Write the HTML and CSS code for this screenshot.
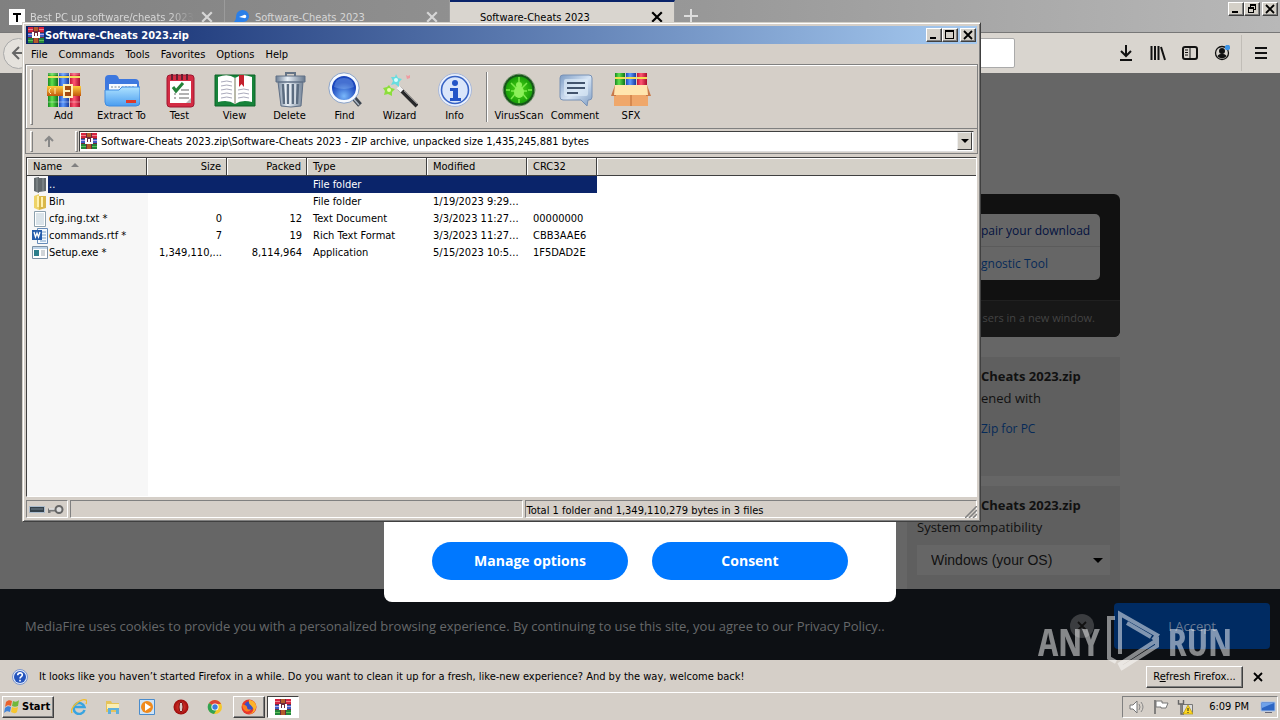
FILE: index.html
```html
<!DOCTYPE html>
<html lang="en">
<head>
<meta charset="utf-8">
<title>Software-Cheats 2023</title>
<link rel="stylesheet" href="styles.css">
</head>
<body>
<svg class="defs" aria-hidden="true">
  <defs>
    <linearGradient id="gGreen"><stop offset="0" stop-color="#178a20"/><stop offset=".4" stop-color="#5fe04e"/><stop offset="1" stop-color="#0d7418"/></linearGradient>
    <linearGradient id="gBlue"><stop offset="0" stop-color="#1e49b8"/><stop offset=".4" stop-color="#5f9bff"/><stop offset="1" stop-color="#183a9c"/></linearGradient>
    <linearGradient id="gRed"><stop offset="0" stop-color="#c01637"/><stop offset=".4" stop-color="#ff5672"/><stop offset="1" stop-color="#a80d2b"/></linearGradient>
    <linearGradient id="gGold" x2="0" y2="1"><stop offset="0" stop-color="#ffcf3d"/><stop offset="1" stop-color="#c2560d"/></linearGradient>
    <linearGradient id="gSky" x2="0" y2="1"><stop offset="0" stop-color="#aee2ff"/><stop offset="1" stop-color="#4a9df0"/></linearGradient>
    <linearGradient id="gSteel"><stop offset="0" stop-color="#6d7f95"/><stop offset=".4" stop-color="#e8eff6"/><stop offset="1" stop-color="#67788d"/></linearGradient>
    <linearGradient id="gNote" x2="1" y2="1"><stop offset="0" stop-color="#7d9cc4"/><stop offset=".5" stop-color="#d7e5f5"/><stop offset="1" stop-color="#7c9bc2"/></linearGradient>
    <radialGradient id="gLens" cy=".8"><stop offset="0" stop-color="#7ab8fb"/><stop offset="1" stop-color="#1b47bd"/></radialGradient>
    <radialGradient id="gVirus"><stop offset="0" stop-color="#4fd815"/><stop offset="1" stop-color="#139a08"/></radialGradient>
    <radialGradient id="gOpera"><stop offset="0" stop-color="#ef4a3c"/><stop offset="1" stop-color="#9c0909"/></radialGradient>
    <symbol id="rar" viewBox="0 0 16 16">
      <path fill="#6d2a3c" d="M0 0h16v16H0z"/>
      <path fill="#d5233f" d="M0 0h5v5H0zM6 0h4v4H6zM11 0h5v5h-5z"/><path fill="#f0808a" d="M0 2h5v1H0zM11 2h5v1h-5z"/>
      <path fill="#3e5cc4" d="M0 6h5v4H0zM11 6h5v4h-5z"/><path fill="#b8a5e6" d="M0 7h4v1H0zM12 7h4v1h-4z"/>
      <path fill="#22863a" d="M0 11h5v5H0zM11 11h5v5h-5z"/><path fill="#60bf57" d="M0 13h5v1H0zM11 13h5v1h-5z"/>
      <path fill="#b55a2a" d="M6 0h4v4H6zM6 11h4v5H6z"/>
      <path fill="#fff" d="M4 5h2v4h1V6h2v3h1V5h2v6H4z"/>
    </symbol>
    <symbol id="cross" viewBox="0 0 10 10"><path d="M1 1l8 8M9 1L1 9" stroke="currentColor" stroke-width="1.8" fill="none"/></symbol>
    <symbol id="min" viewBox="0 0 10 10"><path d="M1 7h6v2H1z"/></symbol>
    <symbol id="max" viewBox="0 0 10 10"><path d="M0 0h9v9H0zM1 2v6h7V2z" fill-rule="evenodd"/></symbol>
    <symbol id="restore" viewBox="0 0 10 10"><path d="M3 0h6v6H7V5h1V2H4v1H3zM1 3h6v6H1zM2 5v3h4V5z" fill-rule="evenodd"/></symbol>
  </defs>
</svg>

<div class="screen">
  <header class="tabstrip">
    <div class="tab">
      <svg class="ic16" viewBox="0 0 16 16"><path fill="#fff" d="M0 0h16v16H0z"/><path d="M4 4h8v2H9v7H7V6H4z"/></svg>
      <span class="tab-name fade">Best PC up software/cheats 2023</span>
      <button class="tab-x" aria-label="Close tab"><svg class="ic12"><use href="#cross"/></svg></button>
    </div>
    <div class="tab">
      <svg class="ic16" viewBox="0 0 16 16"><path fill="#2b7fe8" d="M2 8a6 6 0 0 1 13-1c0 5-4 6-7 6H0c1-1 2-3 2-5z"/><path fill="#fff" d="M5 8l5-2c3-1 3 4 0 3z"/></svg>
      <span class="tab-name">Software-Cheats 2023</span>
      <button class="tab-x" aria-label="Close tab"><svg class="ic12"><use href="#cross"/></svg></button>
    </div>
    <div class="tab active">
      <span class="tab-name">Software-Cheats 2023</span>
      <button class="tab-x" aria-label="Close tab"><svg class="ic12"><use href="#cross"/></svg></button>
    </div>
    <button class="newtab" aria-label="New tab"><svg class="ic14" viewBox="0 0 14 14"><path d="M7 0v14M0 7h14" stroke="#ddd" stroke-width="2"/></svg></button>
    <div class="winbtns">
      <button aria-label="Minimize"><svg><use href="#min"/></svg></button><button aria-label="Restore"><svg><use href="#restore"/></svg></button><button class="close" aria-label="Close"><svg><use href="#cross"/></svg></button>
    </div>
  </header>

  <nav class="navbar">
    <button class="back" aria-label="Back"><svg class="ic16" viewBox="0 0 16 16"><path d="M15 8H2M8 2L2 8l6 6" fill="none" stroke="#666" stroke-width="2"/></svg></button>
    <input class="url" type="text" aria-label="Address">
    <div class="navicons">
      <button aria-label="Downloads"><svg viewBox="0 0 16 16"><path d="M8 0v11M3 6l5 5 5-5M2 15h12" fill="none" stroke="#111" stroke-width="2"/></svg></button>
      <button aria-label="Library"><svg viewBox="0 0 16 16"><path d="M1.500 1v14M5 1v14M8.500 1v14M11 2l4 13" fill="none" stroke="#111" stroke-width="2"/></svg></button>
      <button aria-label="Sidebars"><svg viewBox="0 0 16 16"><rect x="1" y="2" width="14" height="12" rx="2" fill="none" stroke="#111" stroke-width="2"/><path d="M8 2v12M3 5h3M3 7.500h3M3 10h3" stroke="#111"/></svg></button>
      <button aria-label="Account"><svg viewBox="0 0 16 16"><circle cx="8" cy="8" r="6.500" fill="none" stroke="#111" stroke-width="1.300"/><circle cx="8" cy="6" r="3" fill="#111"/><path d="M3.500 11c2-3 7-3 9 0-2 3-7 3-9 0z" fill="#111"/><circle cx="13.500" cy="2.500" r="2.700" fill="#3d94e6"/></svg></button>
      <span class="navsep"></span>
      <button aria-label="Menu"><svg viewBox="0 0 16 16"><path d="M2 3h12M2 8h12M2 13h12" stroke="#111" stroke-width="2"/></svg></button>
    </div>
  </nav>

  <main class="page">
    <div class="column">
      <section class="hero">
        <div class="links"><a class="repair" href="#">pair your download</a><a href="#">gnostic Tool</a></div>
        <p class="hero-foot">sers in a new window.</p>
      </section>
      <aside class="cards">
        <section class="card first"><h3>Cheats 2023.zip</h3><p class="tail">ened with</p><a class="tail" href="#">Zip for PC</a></section>
        <section class="card"><h3>Cheats 2023.zip</h3>
          <label for="os">System compatibility</label>
          <div class="selectbox"><select id="os"><option>Windows (your OS)</option></select><svg class="arrow" viewBox="0 0 10 5"><path d="M0 0h10L5 5z"/></svg></div>
        </section>
      </aside>
    </div>
    <div class="cookies">
      <p>MediaFire uses cookies to provide you with a personalized browsing experience. By continuing to use this site, you agree to our Privacy Policy..</p>
      <button class="dismiss" aria-label="Dismiss"><svg class="ic10"><use href="#cross"/></svg></button>
      <button class="accept">I Accept</button>
    </div>
    <div class="consent"><button>Manage options</button><button>Consent</button></div>
  </main>

  <div class="notice">
    <svg class="ic16" viewBox="0 0 16 16"><circle cx="8" cy="8" r="7.500" fill="#dfe8fa" stroke="#7c96cc"/><circle cx="8" cy="8" r="6" fill="#2454bd"/><path d="M5.700 6.300c.2-3.300 4.800-3 4.600-.3C10.200 7.700 8 7.600 8 9.600M8 10.800v1.700" stroke="#fff" stroke-width="1.600" fill="none"/></svg>
    <span class="notice-text">It looks like you haven’t started Firefox in a while. Do you want to clean it up for a fresh, like-new experience? And by the way, welcome back!</span>
    <button class="refresh">R<u>e</u>fresh Firefox...</button>
    <button class="notice-x" aria-label="Close"><svg class="ic10"><use href="#cross"/></svg></button>
  </div>

  <footer class="taskbar">
    <button class="start"><svg viewBox="0 0 16 16"><path d="M2 3c2-2 4-2 6-1L7 7C5 6 3 6 1 8z" fill="#e8622c"/><path d="M9 2c2 1 4 1 6-1l-1 6c-2 1-4 1-6 0z" fill="#70b83c"/><path d="M1 9c2-2 4-2 6-1l-1 5c-2-1-4-1-6 1z" fill="#3f83d8"/><path d="M8 8c2 1 4 1 6 0l-1 5c-2 2-4 1-6 0z" fill="#f6c62f"/></svg>Start</button>
    <div class="quick">
      <button aria-label="Internet Explorer"><svg viewBox="0 0 16 16"><path d="M13.500 11A5.500 5.500 0 1 1 13.500 8H3" fill="none" stroke="#38a4e0" stroke-width="2.500"/><path d="M1 14C-2 9 10-1 15 1c1 0 1 2 0 4" fill="none" stroke="#f0bd32" stroke-width="1.400"/></svg></button>
      <button aria-label="Explorer"><svg viewBox="0 0 16 16"><path d="M1 2h5l1 2h7v9H1z" fill="#e5c35a"/><path d="M2 5h12v5H2z" fill="#fbeeb2"/><path d="M3 15V9h11v6h-3v-4H6v4z" fill="#5fb0dc"/></svg></button>
      <button aria-label="Media Player"><svg viewBox="0 0 16 16"><path d="M.5.500h15v15H.5z" fill="#cfe4f7" stroke="#4a8ccc"/><circle cx="8" cy="8" r="6" fill="#f08a1c"/><path d="M6 4l6 4-6 4z" fill="#fff"/></svg></button>
      <button aria-label="Opera"><svg viewBox="0 0 16 16"><circle cx="8" cy="8" r="7.500" fill="url(#gOpera)"/><ellipse cx="8" cy="8" rx="2" ry="5" fill="#d8c9c4" stroke="#7a0505"/></svg></button>
      <button aria-label="Chrome"><svg viewBox="0 0 16 16"><circle cx="8" cy="8" r="7" fill="#f4c72c"/><path d="M8 8L2 4a7 7 0 0 1 12 1H8z" fill="#dd4538"/><path d="M8 8L2 4a7 7 0 0 0 5 11l3-5z" fill="#31a352"/><circle cx="8" cy="8" r="3.600" fill="#fff"/><circle cx="8" cy="8" r="2.700" fill="#3b7de0"/></svg></button>
    </div>
    <button class="task" aria-label="Firefox"><svg viewBox="0 0 16 16"><circle cx="8" cy="8" r="7.500" fill="#e8372c"/><circle cx="8" cy="7" r="4.500" fill="#3b4fc4"/><path d="M8 1c5 0 8 4 7 8s-4 6-7 6c4-1 5-4 4-6-1-3-5-3-4-8z" fill="#fdb32a"/><path d="M1 4c1 3 4 1 5 4 0 3 3 3 4 2-1 4-9 4-9-6z" fill="#ff7e1e"/></svg></button>
    <button class="task pressed" aria-label="WinRAR"><svg><use href="#rar"/></svg></button>
    <div class="tray">
      <svg viewBox="0 0 16 16"><path d="M1 6h3l4-4v12l-4-4H1z" fill="#fff" stroke="#777"/><path d="M10 5q2 3 0 6M12 3q4 5 0 10" fill="none" stroke="#888"/></svg>
      <svg viewBox="0 0 16 16"><path d="M2 1v14" stroke="#666" stroke-width="1.500"/><path d="M3 2h6v2h6l-2 5H8V8H3z" fill="#fff" stroke="#777"/></svg>
      <svg viewBox="0 0 16 16"><path d="M5.500 5.500h10v8h-10z" fill="#ddd" stroke="#777"/><path d="M1.500 1v4h5V1M4 5v10h3" fill="none" stroke="#666" stroke-width="1.400"/><path d="M11 6l5 9H6z" fill="#ffd81f" stroke="#a88a00" stroke-width=".6"/><path d="M11 9v3M11 13v1" stroke="#222"/></svg>
      <time>6:09 PM</time>
      <svg viewBox="0 0 16 16"><path d="M1 3h14v9H1z" fill="#2d66c4" stroke="#abc4ea"/><path d="M2 4h12L2 9z" fill="#6fa2ea"/><path d="M5 13h7v1H5z" fill="#667"/></svg>
    </div>
  </footer>

  <section class="rar-window" aria-label="WinRAR">
    <div class="titlebar"><svg class="ic16"><use href="#rar"/></svg><span>Software-Cheats 2023.zip</span>
      <div class="winbtns">
        <button aria-label="Minimize"><svg><use href="#min"/></svg></button><button aria-label="Maximize"><svg><use href="#max"/></svg></button><button class="close" aria-label="Close"><svg><use href="#cross"/></svg></button>
      </div>
    </div>
    <div class="menubar"><button>File</button><button>Commands</button><button>Tools</button><button>Favorites</button><button>Options</button><button>Help</button></div>
    <div class="toolbar">
      <span class="grip"></span>
      <button class="tool"><svg viewBox="0 0 36 36"><path fill="url(#gGreen)" d="M2 1h10v34H2z"/><path fill="url(#gBlue)" d="M13 1h10v34H13z"/><path fill="url(#gRed)" d="M24 1h10v34H24z"/><path d="M2 5h10M13 5h10M24 5h10" stroke="#f1df5f" stroke-width="2"/><path d="M2 2h32M2 30h32" stroke="#fff" stroke-opacity=".4"/><path fill="url(#gGold)" d="M1 14h34v10H1z"/><rect x="18" y="13" width="8" height="12" fill="#a44a10" stroke="#fff0b8" stroke-width="2"/><path d="M18 19h6" stroke="#fff0b8" stroke-width="2"/><path d="M5 16q-4 3 0 6M9 16v6" stroke="#fff0b8" fill="none"/></svg>Add</button>
      <button class="tool wide"><svg viewBox="0 0 36 36"><path fill="#3d78df" d="M1 7q0-4 4-4h6q3 0 4 4h16q4 0 4 4v14H1z"/><path fill="#f6faff" d="M5 12h28v12H5z"/><path d="M7 15h23" stroke="#789" stroke-dasharray="2 1.500"/><path fill="url(#gSky)" d="M1 18h14l3-3h18v15q0 4-4 4H5q-4 0-4-4z" stroke="#3e8be2"/><path fill="#db3b2d" d="M22 28h10v3H22z"/></svg>Extract To</button>
      <button class="tool"><svg viewBox="0 0 36 36"><rect x="5" y="3" width="27" height="32" rx="3" fill="#d42b43" stroke="#9e1730"/><path fill="#fff" d="M8 9h21v22H8z"/><path d="M10 2v6M15 2v6M20 2v6M25 2v6" stroke="#642033" stroke-width="2"/><path d="M11 15l3 4 7-8" fill="none" stroke="#238239" stroke-width="3"/><path d="M19 18h8M12 22h2M17 22h10M12 26h2M17 26h10" stroke="#999" stroke-width="1.500"/><path d="M24 31h5v-5z" fill="#bbb"/></svg>Test</button>
      <button class="tool"><svg class="w42" viewBox="0 0 42 36"><path fill="#17833a" stroke="#0e6529" d="M1 3h40v31H1z"/><path fill="#fff" d="M4 5q10-4 17 1 7-5 17-1v25q-10-3-17 2-7-5-17-2z"/><path d="M20 6h2v26h-2z" fill="#b9b9a9"/><path d="M7 10q6-2 11 0M7 14q6-2 11 0M7 18q6-2 11 0M7 22q6-2 11 0M7 26q6-2 11 0M24 18q6-2 11 0M24 22q6-2 11 0M24 26q6-2 11 0" fill="none" stroke="#aab"/><path fill="#c4202d" d="M25 3h5v12l-2.500-3L25 15z"/></svg>View</button>
      <button class="tool"><svg viewBox="0 0 36 36"><path d="M14 4V1h9v3" fill="none" stroke="#657486" stroke-width="2"/><path fill="url(#gSteel)" stroke="#607086" d="M4 4h29v6H4zM6 10h25l-2 24q-10 2-20 0z"/><path d="M11 12l1 20M16 12v20M21 12v20M26 12l-1 20" stroke="#5b6c80" stroke-width="2.500"/><path d="M13 12l1 20M18 12v20M23 12v20" stroke="#f2f7fc"/></svg>Delete</button>
      <button class="tool"><svg viewBox="0 0 36 36"><path d="M26 25l7 8" stroke="#3e4650" stroke-width="5"/><path d="M25 25l7 8" stroke="#aab5c2" stroke-width="1.500"/><circle cx="17" cy="16" r="13.500" fill="url(#gLens)" stroke="#f5f9ff" stroke-width="3"/><circle cx="17" cy="16" r="15.200" fill="none" stroke="#8da6cc"/><path d="M7 15q1-9 10-9t10 9q-10 4-20 0z" fill="#a9cfff" opacity=".3"/></svg>Find</button>
      <button class="tool"><svg viewBox="0 0 36 36"><path d="M17 16l18 18" stroke="#29292b" stroke-width="4"/><path d="M16 15l4 4" stroke="#f3f3f3" stroke-width="4"/><path d="M22 19l13 13" stroke="#888"/><path fill="#68dde0" d="M14 2l2 4 4 1-3 3v5l-4-3-4 1 2-4-2-4h4z"/><path fill="#8cde3c" d="M7 13l2 3 4 1-3 3v4l-4-2-4 1 1-4-2-3 4-1z"/><path fill="#f09aa0" d="M24 3l2 1 2-1v3l-3 1z"/><circle cx="14" cy="8" r="2" fill="#d8ffff"/><circle cx="7" cy="18" r="2" fill="#e6ffad"/></svg>Wizard</button>
      <button class="tool"><svg viewBox="0 0 36 36"><circle cx="18" cy="18" r="16.500" fill="#e8effc" stroke="#a9b8d8"/><circle cx="18" cy="18" r="13.500" fill="#dae6fa" stroke="#3763c4" stroke-width="1.600"/><circle cx="18" cy="11" r="3" fill="#2455c7"/><path fill="#2455c7" d="M13 16h8v10h3v3H13v-3h3v-7h-3z"/></svg>Info</button>
      <span class="toolsep"></span>
      <button class="tool scan"><svg viewBox="0 0 36 36"><circle cx="18" cy="18" r="16" fill="#d8ead2" stroke="#75916f"/><circle cx="18" cy="18" r="14.500" fill="url(#gVirus)" stroke="#17551a" stroke-width="2"/><path d="M18 5v5M18 27v4M5 18h4M27 18h4M10 11l5 5M26 11l-5 5M10 27l5-6M26 27l-5-6M10 19h16" stroke="#7bea4c" stroke-width="1.500"/><ellipse cx="18" cy="20" rx="5" ry="6" fill="#8cf05a"/><circle cx="18" cy="13" r="3" fill="#8cf05a"/></svg>VirusScan</button>
      <button class="tool scan"><svg viewBox="0 0 36 36"><path d="M6 3h26q3 0 3 3v19q0 3-3 3h-1l-1 6-6-6H6q-3 0-3-3V6q0-3 3-3z" fill="url(#gNote)" stroke="#7892b6"/><rect x="7" y="7" width="24" height="17" rx="2" fill="#dce9f7" opacity=".7"/><path d="M10 11h18M10 16h18M10 21h11" stroke="#42546d" stroke-width="2"/></svg>Comment</button>
      <button class="tool scan"><svg class="w42" viewBox="0 0 42 36"><path fill="url(#gGreen)" d="M5 1h10v13H5z"/><path fill="url(#gBlue)" d="M16 1h10v13H16z"/><path fill="url(#gRed)" d="M27 1h10v13H27z"/><path d="M5 6h10M16 6h10M27 6h10" stroke="#f4de54" stroke-width="2"/><path fill="#efa76a" d="M4 22h34v12H4z"/><path fill="#c8794a" d="M5 13l-4 11h5zM37 13l4 11h-5z"/><path fill="#ffe5ae" d="M5 13h32l1 10H4z"/><path d="M21 23v11" stroke="#bd6b35"/></svg>SFX</button>
    </div>
    <div class="addressbar">
      <span class="grip"></span>
      <button class="up" aria-label="Up one level"><svg class="ic12" viewBox="0 0 12 12"><path d="M6 12V2M2 6l4-4 4 4" fill="none" stroke="#888" stroke-width="2"/></svg></button>
      <span class="grip"></span>
      <div class="combo"><svg class="ic16"><use href="#rar"/></svg><input type="text" aria-label="Archive path" value="Software-Cheats 2023.zip\Software-Cheats 2023 - ZIP archive, unpacked size 1,435,245,881 bytes"><button aria-label="Show paths"><svg viewBox="0 0 10 10"><path d="M1 3h8L5 7z"/></svg></button></div>
    </div>
    <div class="list">
      <table>
        <colgroup><col class="c-name"><col class="c-size"><col class="c-size"><col class="c-name"><col class="c-mod"><col class="c-crc"><col></colgroup>
        <thead><tr><th>Name<svg class="sort" viewBox="0 0 8 4"><path d="M0 4l4-4 4 4z" fill="#808080"/></svg></th><th class="num">Size</th><th class="num">Packed</th><th>Type</th><th>Modified</th><th>CRC32</th><th></th></tr></thead>
        <tbody>
          <tr class="selected"><td><svg class="ic16" viewBox="0 0 16 16"><path fill="#62696c" d="M2 1l5-1v16l-5-2zM7 1h7v13l-7 1z"/><path stroke="#8d9697" d="M5 1v14M11 1v13"/></svg><span>..</span></td><td></td><td></td><td>File folder</td><td></td><td></td><td></td></tr>
          <tr><td><svg class="ic16" viewBox="0 0 16 16"><path fill="#eed368" d="M2 2l5-2v16l-5-2z"/><path fill="#d9b748" d="M7 2h7v12l-7 2z"/><path fill="#fff1ad" d="M5 2h2v11H5zM9 3h2v10H9z"/></svg><span>Bin</span></td><td></td><td></td><td>File folder</td><td>1/19/2023 9:29...</td><td></td><td></td></tr>
          <tr><td><svg class="ic16" viewBox="0 0 16 16"><path fill="#fff" stroke="#8ca0ad" d="M2.500.500h11v15h-11z"/><path d="M4 3h8M4 5h8M4 7h8M4 9h8M4 11h8M4 13h8" stroke="#b5c8d4"/></svg><span>cfg.ing.txt *</span></td><td class="num">0</td><td class="num">12</td><td>Text Document</td><td>3/3/2023 11:27...</td><td>00000000</td><td></td></tr>
          <tr><td><svg class="ic16" viewBox="0 0 16 16"><path fill="#f5faff" stroke="#658bb8" d="M5.500.500h10v15h-10z"/><path d="M10 4h4M10 7h4M10 10h4M8 13h6" stroke="#799fc7"/><path fill="#255dac" d="M0 2h10v10H0z"/><path d="M2 4l1.500 5L5 5l1.500 4L8 4" fill="none" stroke="#fff" stroke-width="1.300"/></svg><span>commands.rtf *</span></td><td class="num">7</td><td class="num">19</td><td>Rich Text Format</td><td>3/3/2023 11:27...</td><td>CBB3AAE6</td><td></td></tr>
          <tr><td><svg class="ic16" viewBox="0 0 16 16"><path fill="#fff" stroke="#7c91a5" d="M.5 1.500h15v12H.5z"/><path fill="#bdd3e8" d="M1 2h14v2H1z"/><path fill="#2c7e8b" d="M2 5h5v6H2z"/><path d="M9 6h4M9 8h4M9 10h4" stroke="#a1aab1"/></svg><span>Setup.exe *</span></td><td class="num">1,349,110,...</td><td class="num">8,114,964</td><td>Application</td><td>5/15/2023 10:5...</td><td>1F5DAD2E</td><td></td></tr>
        </tbody>
      </table>
    </div>
    <div class="status">
      <span class="cell icons"><svg viewBox="0 0 16 16"><path d="M.5 5.500h15v6H.5z" fill="#34414b" stroke="#abc"/><path d="M2 8h12" stroke="#70818e"/></svg><svg viewBox="0 0 16 16"><path d="M9 9H1v3" stroke="#777" stroke-width="3" fill="none"/><path d="M9 8H1" stroke="#eee" stroke-width="1.500"/><circle cx="11" cy="8.500" r="3.500" fill="#ddd" stroke="#666" stroke-width="2"/></svg></span>
      <span class="cell"></span><span class="cell">Total 1 folder and 1,349,110,279 bytes in 3 files</span>
      <svg class="size-grip" viewBox="0 0 12 12"><path d="M0 12L12 0M4 12l8-8M8 12l4-4" stroke="#808080" stroke-width="1.500"/></svg>
    </div>
  </section>

  <div class="watermark" aria-label="ANY RUN"><span>ANY</span><svg viewBox="0 0 56 62"><g fill="none" stroke="#fff" stroke-width="4"><path d="M9 8H3v40l7 4"/><path d="M14 44V4l37 21-4 5"/><path d="M21 13l24 14"/><path d="M16 58l35-22v-6L14 54z"/></g></svg><span>RUN</span></div>
</div>
</body>
</html>
```
FILE: styles.css
```css
* { box-sizing: border-box; }
body { margin: 0; font: 11px/13px "DejaVu Sans Condensed", "DejaVu Sans", sans-serif; color: #000; }
button, input, select { font: inherit; color: inherit; margin: 0; padding: 0; border: 0; background: none; border-radius: 0; }
p, h3 { margin: 0; }
a { text-decoration: none; color: #062a58; }
svg { display: block; flex: none; }
.defs { position: absolute; width: 0; height: 0; }
.ic10 { width: 10px; height: 10px; }
.ic12 { width: 12px; height: 12px; }
.ic14 { width: 14px; height: 14px; }
.ic16 { width: 16px; height: 16px; }

.screen { position: relative; display: flex; flex-direction: column; height: 100vh; min-height: 640px; overflow: hidden; background: #d5cfc8; }

/* Browser chrome */
.tabstrip { display: flex; flex: none; height: 33px; background: linear-gradient(90deg, #808080, #989898 55%, #b8b8b8); border-bottom: 1px solid #777; }
.tab { display: flex; align-items: center; width: 225px; padding: 2px 9px 0 9px; gap: 5px; color: #d6d6d6; border-right: 1px solid #9b9b9b; }
.tab-name { flex: 1; overflow: hidden; white-space: nowrap; }
.tab-x { padding: 0 2px; }
.tab.active { background: #d9d5cf; color: #000; border-top: 2px solid #0a246a; padding-top: 0; padding-left: 30px; }
.fade { mask-image: linear-gradient(90deg, #000 85%, transparent); }
.newtab { padding: 0 9px; }
.winbtns { display: flex; margin-left: auto; }
.winbtns button { display: grid; place-items: center; width: 16px; height: 14px; background: #d4d0c8; border: 1px solid; border-color: #fff #404040 #404040 #fff; box-shadow: inset -1px -1px #808080; }
.winbtns .close { margin-left: 2px; }
.winbtns svg { width: 10px; height: 10px; }
.tabstrip .winbtns { padding: 2px 2px 0 0; }
.navbar { display: flex; align-items: center; flex: none; height: 40px; padding: 0 3px; background: #d9d5cf; }
.back { display: grid; place-items: center; width: 31px; height: 31px; border: 1px solid #aaa; border-radius: 50%; background: #e5e2dd; }
.url { flex: 1; height: 30px; margin: 0 95px 0 160px; background: #fff; border: 1px solid #aaa; border-radius: 2px; }
.navicons { display: flex; align-items: center; }
.navicons button { padding: 8px; }
.navicons svg { width: 16px; height: 16px; }
.navsep { width: 1px; height: 36px; margin: 0 3px; background: #c1bdb7; }

/* Dimmed web page */
.page { position: relative; flex: 1; min-height: 0; overflow: hidden; padding-top: 121px; background: #666; font: 13px/18px "Open Sans", sans-serif; }
.column { max-width: 960px; margin: 0 auto; }
.hero { background: #111; border-radius: 6px; }
.links { display: flex; flex-direction: column; align-items: flex-end; padding: 20px 20px 20px 0; }
.links a { width: 220px; height: 33px; padding: 8px 0 0 101px; font-size: 12px; background: #666; border-bottom: 1px solid #5b5b5b; }
.links a:first-child { border-radius: 5px 5px 0 0; color: #04123f; }
.links a:last-child { border-radius: 0 0 5px 5px; border-bottom: 0; }
.hero-foot { height: 37px; padding: 8px 25px; font-size: 11px; text-align: right; color: #444; background: #171717; border-top: 1px solid #202020; border-radius: 0 0 6px 6px; }
.cards { display: flex; flex-direction: column; gap: 10px; width: 213px; margin: 20px 0 0 auto; }
.card { display: flex; flex-direction: column; gap: 4px; min-height: 119px; padding: 10px; background: #5f5f5f; color: #111; }
.card h3, .tail { margin-left: 64px; font-size: 13px; line-height: 18px; }
.card a { margin-top: 9px; font-size: 12px; }
.selectbox { position: relative; margin-top: 5px; }
.selectbox select { width: 193px; height: 30px; padding-left: 14px; appearance: none; background: #666; color: #111; font: 14px "Liberation Sans", sans-serif; }
.arrow { position: absolute; right: 7px; top: 13px; width: 10px; height: 5px; pointer-events: none; }
.cookies { position: absolute; left: 0; right: 0; bottom: 0; display: flex; align-items: center; height: 71px; padding: 0 10px 0 25px; background: #0d1014; color: #66686a; }
.cookies p { margin-top: 3px; white-space: nowrap; }
.dismiss { display: grid; place-items: center; width: 24px; height: 24px; margin: 2px 20px 0 auto; border-radius: 50%; background: #3b3d40; color: #111; }
.accept { width: 156px; height: 46px; margin-top: 3px; border-radius: 4px; background: #002b62; color: #687a94; }
.consent { position: absolute; left: calc(50% - 256px); bottom: 58px; width: 512px; height: 240px; display: flex; align-items: flex-end; justify-content: center; gap: 24px; padding-bottom: 22px; background: #fff; border-radius: 8px; }
.consent button { width: 196px; height: 38px; border-radius: 19px; background: #0078ff; color: #fff; font-weight: 700; font-size: 14px; }

/* Notification bar and taskbar */
.notice { display: flex; align-items: center; flex: none; height: 33px; padding: 1px 17px 0 12px; border-bottom: 1px solid #fff; }
.notice-text { margin-left: 11px; white-space: nowrap; }
.refresh { width: 97px; height: 22px; margin-left: auto; }
.refresh, .start, .task { border: 1px solid; border-color: #fff #404040 #404040 #fff; box-shadow: inset -1px -1px #808080; }
.notice-x { margin-left: 10px; }
.taskbar { display: flex; align-items: center; flex: none; height: 27px; padding: 0 2px; }
.taskbar svg { width: 16px; height: 16px; }
.start { display: flex; align-items: center; gap: 2px; width: 52px; height: 22px; padding-left: 1px; font-weight: 700; }
.quick { display: flex; gap: 18px; margin: 0 10px 0 17px; }
.task { display: grid; place-items: center; width: 32px; height: 22px; margin-right: 2px; }
.task.pressed { background: #fff; border-color: #404040 #fff #fff #404040; box-shadow: none; }
.tray { display: flex; align-items: center; gap: 8px; height: 22px; margin-left: auto; padding: 0 1px 0 6px; border: 1px solid; border-color: #808080 #fff #fff #808080; }
.tray time { margin: 0 3px 0 8px; }

/* Archive window */
.rar-window { position: absolute; left: 22px; top: 22px; right: 299px; bottom: 198px; display: flex; flex-direction: column; padding: 2px; background: #d5cfc8; border: 1px solid; border-color: #d4d0c8 #404040 #404040 #d4d0c8; box-shadow: inset 1px 1px #fff, inset -1px -1px #808080; }
.titlebar { display: flex; align-items: center; flex: none; height: 18px; margin: 1px; padding: 0 1px 0 2px; gap: 1px; color: #fff; font-weight: 700; background: linear-gradient(90deg, #0a246a, #a6caf0); }
.titlebar .winbtns { color: #000; }
.menubar { display: flex; flex: none; gap: 1px; height: 19px; padding: 0 1px; }
.menubar button { padding: 0 5px; }
.toolbar { display: flex; align-items: center; flex: none; height: 65px; border: 1px solid #808080; box-shadow: inset 1px 1px #fff; padding: 1px 4px; }
.grip { width: 3px; height: 56px; margin-right: 3px; border: 1px solid; border-color: #fff #808080 #808080 #fff; }
.tool { display: flex; flex-direction: column; align-items: center; width: 55px; gap: 1px; }
.tool svg { width: 36px; height: 36px; }
.tool .w42 { width: 42px; }
.wide { width: 61px; }
.scan { width: 56px; }
.toolsep { width: 2px; height: 50px; margin: 0 3px 0 4px; border-left: 1px solid #808080; border-right: 1px solid #fff; }
.addressbar { display: flex; align-items: center; flex: none; height: 25px; padding: 0 3px 0 4px; border: 1px solid #808080; border-top: 0; }
.addressbar .grip { height: 21px; margin-right: 1px; }
.up { display: grid; place-items: center; width: 41px; height: 20px; padding-right: 12px; }
.combo { display: flex; flex: 1; align-items: center; height: 21px; padding: 0 1px; background: #fff; border: 1px solid; border-color: #404040 #ddd #ddd #404040; }
.combo input { flex: 1; min-width: 0; margin-left: 4px; }
.combo button { display: grid; place-items: center; width: 15px; height: 18px; background: #d4d0c8; border: 1px solid; border-color: #eee #404040 #404040 #eee; }
.combo button svg { width: 10px; height: 10px; }
.list { flex: 1; min-height: 0; margin: 3px 1px 2px; overflow: hidden; border: 1px solid; border-color: #404040 #fff #fff #404040; background: linear-gradient(90deg, #f7f7f7 121px, #fff 121px); }
table { width: 100%; table-layout: fixed; border-collapse: separate; border-spacing: 0; }
.c-name { width: 120px; }
.c-size { width: 80px; }
.c-mod { width: 100px; }
.c-crc { width: 70px; }
th, td { height: 17px; padding: 0 5px 0 6px; text-align: left; font-weight: 400; white-space: nowrap; overflow: hidden; }
th { height: 18px; background: #d4d0c8; border-right: 1px solid #404040; border-bottom: 1px solid #404040; box-shadow: inset 1px 1px #fff; }
th:last-child { border-right: 0; }
td:first-child { display: flex; align-items: center; padding: 0 0 0 5px; }
td span { flex: 1; line-height: 17px; padding-left: 1px; }
.num { text-align: right; }
.sort { display: inline-block; width: 8px; height: 4px; margin: 0 0 3px 9px; }
.selected span, .selected td:not(:first-child):not(:last-child) { background: #0a246a; color: #fff; }
.status { display: flex; align-items: center; flex: none; height: 20px; gap: 2px; padding: 0 1px; }
.cell { flex: 1; height: 18px; padding: 3px 1px 0; line-height: 13px; border: 1px solid; border-color: #808080 #fff #fff #808080; }
.icons { display: flex; flex: none; align-items: center; gap: 3px; width: 42px; padding: 0 2px; }
.icons svg { width: 16px; height: 16px; }
.size-grip { position: absolute; right: 3px; bottom: 3px; width: 12px; height: 12px; }

.watermark { position: absolute; right: 48px; bottom: 48px; display: flex; align-items: center; gap: 6px; font: 300 38px/48px "Open Sans Condensed", "Roboto Condensed", "Liberation Sans Narrow", "Liberation Sans", sans-serif; color: #fff; opacity: .5; pointer-events: none; }
.watermark svg { width: 56px; height: 62px; }
```
